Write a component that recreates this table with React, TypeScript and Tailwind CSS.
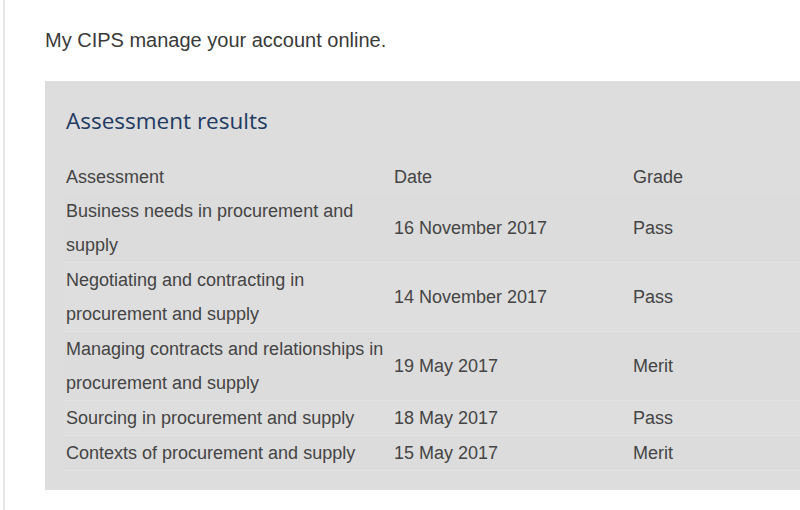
import React from "react";

const rows: [string, string, string][] = [
  ["Business needs in procurement and supply", "16 November 2017", "Pass"],
  ["Negotiating and contracting in procurement and supply", "14 November 2017", "Pass"],
  ["Managing contracts and relationships in procurement and supply", "19 May 2017", "Merit"],
  ["Sourcing in procurement and supply", "18 May 2017", "Pass"],
  ["Contexts of procurement and supply", "15 May 2017", "Merit"],
];

export default function App() {
  return (
    <div className="w-[800px] h-[510px] bg-white overflow-hidden" style={{ fontFamily: '"Liberation Sans", Arial, sans-serif' }}>
      <div className="h-full ml-[3px] border-l-2 border-[#e6e6e6] pl-[40px] pt-[28px]">
        <p className="text-[20px] leading-[24px] text-[#3a3a3a]">My CIPS manage your account online.</p>
        <div className="mt-[29px] w-[800px] bg-[#dddddd] pl-[19px] pt-[23px] pb-[19px]">
          <h2 className="text-[22.5px] leading-[34px] text-[#1f3b63] pl-[2px]" style={{ fontFamily: '"Open Sans", sans-serif' }}>
            Assessment results
          </h2>
          <table className="mt-[22px] border-collapse text-[18px] leading-[34px] text-[#444444]">
            <thead>
              <tr>
                <th className="w-[328px] text-left font-normal px-[2px] pr-[6px] align-middle">Assessment</th>
                <th className="w-[239px] text-left font-normal px-[2px] align-middle">Date</th>
                <th className="w-[200px] text-left font-normal px-[2px] align-middle">Grade</th>
              </tr>
            </thead>
            <tbody>
              {rows.map((r, i) => (
                <tr key={i} className={i % 2 === 0 ? "bg-[#dcdcdc] border-b border-[#e2e2e2]" : "bg-[#dedede] border-b border-[#e2e2e2]"}>
                  <td className="px-[2px] pr-[6px] align-middle">{r[0]}</td>
                  <td className="px-[2px] align-middle">{r[1]}</td>
                  <td className="px-[2px] align-middle">{r[2]}</td>
                </tr>
              ))}
            </tbody>
          </table>
        </div>
      </div>
    </div>
  );
}
